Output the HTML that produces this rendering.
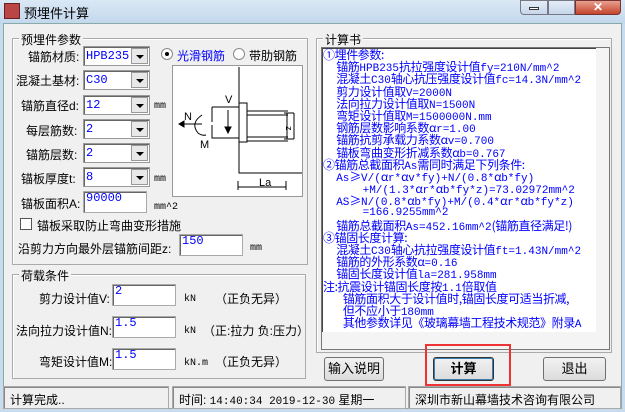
<!DOCTYPE html><html><head><meta charset="utf-8"><style>
*{margin:0;padding:0;box-sizing:border-box}
body{width:625px;height:412px;overflow:hidden;background:#c9dcee;font-family:"Liberation Sans","Noto Sans CJK SC",sans-serif;font-size:12px;color:#000;position:relative}
.a{position:absolute;white-space:nowrap}
.client{position:absolute;left:3px;top:23px;width:619px;height:386px;background:#f0f0f0;border:1px solid #8aa;}
.grp{position:absolute;border:1px solid #aaa;box-shadow:inset 1px 1px 0 #fff}
.lg{position:absolute;background:#f0f0f0;padding:0 2px;font-size:12px;top:-8px;left:6px}
.cb{position:absolute;height:20px;width:68px;background:#fff;border:1px solid #999;box-shadow:inset 1px 1px 0 #666;color:#00f;font-family:"Liberation Mono",monospace;font-size:12px;padding:2px 2px;line-height:14px}
.cb i{position:absolute;right:1px;top:1px;width:17px;height:16px;background:#e8e8e8;border:1px solid #999;}
.cb i:after{content:"";position:absolute;left:4px;top:6px;border:4px solid transparent;border-top:4px solid #000}
.tb{position:absolute;height:22px;background:#fff;border:1px solid #aaa;box-shadow:inset 1px 1px 0 #666;color:#00f;font-family:"Liberation Mono",monospace;font-size:12px;padding:0 2px}
.unit{position:absolute;font-family:"Liberation Mono",monospace;font-size:10px}
.btn{position:absolute;height:24px;border:1px solid #707070;border-radius:3px;background:linear-gradient(#f2f2f2,#dcdcdc);text-align:center;line-height:22px;font-size:13px}
.txt{font-family:"Liberation Mono",monospace;font-size:11px;color:#00f}
.txt div{white-space:nowrap;height:12.2px;line-height:12.2px;overflow:visible;display:block}
.txt b{font-weight:normal;font-family:"Noto Sans CJK SC",sans-serif;font-size:12px;letter-spacing:-0.4px;line-height:1}
</style></head><body>
<div class="a" style="left:0;top:0;width:625px;height:24px;background:linear-gradient(#dbe8f5,#c3d7ec)"></div>
<div class="a" style="left:4px;top:3px;width:16px;height:16px;background:#b44;border:1px solid #622"></div>
<div class="a" style="left:24px;top:3px;font-size:13px">预埋件计算</div>
<div class="a" style="left:520px;top:0;width:28px;height:15px;border:1px solid #778;border-radius:0 0 0 4px;background:linear-gradient(#e4edf7,#c6d6ea)"><div style="position:absolute;left:8px;top:6px;width:10px;height:3px;border:1px solid #333;background:#fff"></div></div>
<div class="a" style="left:548px;top:0;width:27px;height:15px;border:1px solid #778;background:linear-gradient(#e4edf7,#c6d6ea)"></div>
<div class="a" style="left:575px;top:0;width:46px;height:15px;border:1px solid #733;border-radius:0 0 4px 0;background:linear-gradient(#e8a090,#c4442c);color:#fff;text-align:center;font-weight:bold;line-height:13px">✕</div>
<div class="client"></div>

<div class="grp" style="left:12px;top:38px;width:296px;height:227px"><div class="lg">预埋件参数</div></div>
<div class="a" style="left:28px;top:48px">锚筋材质:</div><div class="cb" style="left:83px;top:46px;width:67px">HPB235<i></i></div>
<div class="a" style="left:16px;top:72px">混凝土基材:</div><div class="cb" style="left:83px;top:70px;width:67px">C30<i></i></div>
<div class="a" style="left:21px;top:97px">锚筋直径d:</div><div class="cb" style="left:83px;top:95px;width:67px">12<i></i></div><div class="unit" style="left:154px;top:101px">mm</div>
<div class="a" style="left:26px;top:122px">每层筋数:</div><div class="cb" style="left:83px;top:119px;width:67px">2<i></i></div>
<div class="a" style="left:26px;top:146px">锚筋层数:</div><div class="cb" style="left:83px;top:143px;width:67px">2<i></i></div>
<div class="a" style="left:21px;top:170px">锚板厚度t:</div><div class="cb" style="left:83px;top:167px;width:67px">8<i></i></div><div class="unit" style="left:154px;top:174px">mm</div>
<div class="a" style="left:21px;top:195px">锚板面积A:</div><div class="tb" style="left:83px;top:191px;width:64px;height:22px;line-height:13px">90000</div><div class="unit" style="left:154px;top:202px">mm^2</div>
<div class="a" style="left:20px;top:218px;width:12px;height:12px;border:1px solid #555;background:#fff"></div>
<div class="a" style="left:37px;top:217px">锚板采取防止弯曲变形措施</div>
<div class="a" style="left:18px;top:240px">沿剪力方向最外层锚筋间距z:</div><div class="tb" style="left:179px;top:234px;width:64px;height:22px;line-height:12px">150</div><div class="unit" style="left:250px;top:243px">mm</div>

<div class="a" style="left:161px;top:48px;width:12px;height:12px;border-radius:50%;border:1px solid #888;background:#fff"><div style="position:absolute;left:3px;top:3px;width:4px;height:4px;border-radius:50%;background:#000"></div></div>
<div class="a" style="left:177px;top:47px;color:#00f">光滑钢筋</div>
<div class="a" style="left:233px;top:48px;width:12px;height:12px;border-radius:50%;border:1px solid #888;background:#fff"></div>
<div class="a" style="left:249px;top:47px">带肋钢筋</div>
<svg class="a" style="left:172px;top:65px" width="131" height="132" viewBox="0 0 131 132">
<rect x="0.5" y="0.5" width="130" height="131" fill="#fff" stroke="#999"/>
<g stroke="#000" fill="none" stroke-width="1">
<path d="M67 2V108H130M67 108"/>
<rect x="67" y="38" width="8" height="39" fill="#fff"/>
<path d="M75 46H116M75 50H116M75 72H116M75 76H116"/>
<path d="M115 48V74M112 48H122M112 74H122M122 48V74"/>
<path d="M40 42H67M40 42V57M40 60V73H67"/>
<path d="M56 45V67"/><path d="M53 62L56 68L59 62Z" fill="#000"/>
<path d="M8 59H30"/><path d="M12 56L7 59L12 62Z" fill="#000"/>
<path d="M30 50Q18 58 26 68Q30 71 34 70"/>
<path d="M66 116V125M114 116V125M66 122H114"/>
</g>
<text x="53" y="38" font-size="11" font-family="Liberation Sans">V</text>
<text x="12" y="55" font-size="11" font-family="Liberation Sans">N</text>
<text x="28" y="83" font-size="11" font-family="Liberation Sans">M</text>
<text x="87" y="121" font-size="11" font-family="Liberation Sans">La</text>
<text x="117" y="64" font-size="9" font-family="Liberation Sans" transform="rotate(90 117 61)">z</text>
</svg>

<div class="grp" style="left:12px;top:274px;width:294px;height:105px"><div class="lg">荷载条件</div></div>
<div class="a" style="left:39px;top:290px">剪力设计值V:</div><div class="tb" style="left:112px;top:284px;width:64px;height:22px;line-height:12px">2</div><div class="unit" style="left:184px;top:294px">kN</div><div class="a" style="left:215px;top:290px">（正负无异）</div>
<div class="a" style="left:16px;top:322px">法向拉力设计值N:</div><div class="tb" style="left:112px;top:316px;width:64px;height:22px;line-height:12px">1.5</div><div class="unit" style="left:184px;top:326px">kN</div><div class="a" style="left:203px;top:322px">（正:拉力 负:压力）</div>
<div class="a" style="left:39px;top:353px">弯矩设计值M:</div><div class="tb" style="left:112px;top:348px;width:64px;height:22px;line-height:12px">1.5</div><div class="unit" style="left:184px;top:358px">kN.m</div><div class="a" style="left:215px;top:353px">（正负无异）</div>

<div class="grp" style="left:316px;top:38px;width:296px;height:315px"><div class="lg">计算书</div></div>
<div class="a" style="left:321px;top:47px;width:289px;height:303px;background:#fff;border:1px solid #777;box-shadow:inset 1px 1px 0 #444"></div>
<div class="a" style="left:596px;top:48px;width:13px;height:284px;background:#f4f4f4"></div>
<div class="a" style="left:322px;top:332px;width:287px;height:17px;background:#f4f4f4"></div>
<div class="a txt" style="left:323px;top:49px">
<div><b>①埋件参数:</b></div>
<div>&nbsp;&nbsp;<b>锚筋</b>HPB235<b>抗拉强度设计值</b>fy=210N/mm^2</div>
<div>&nbsp;&nbsp;<b>混凝土</b>C30<b>轴心抗压强度设计值</b>fc=14.3N/mm^2</div>
<div>&nbsp;&nbsp;<b>剪力设计值取</b>V=2000N</div>
<div>&nbsp;&nbsp;<b>法向拉力设计值取</b>N=1500N</div>
<div>&nbsp;&nbsp;<b>弯矩设计值取</b>M=1500000N.mm</div>
<div>&nbsp;&nbsp;<b>钢筋层数影响系数α</b>r=1.00</div>
<div>&nbsp;&nbsp;<b>锚筋抗剪承载力系数α</b>v=0.700</div>
<div>&nbsp;&nbsp;<b>锚板弯曲变形折减系数α</b>b=0.767</div>
<div><b>②锚筋总截面积</b>As<b>需同时满足下列条件:</b></div>
<div>&nbsp;&nbsp;As<b>≥</b>V/(<b>α</b>r*<b>α</b>v*fy)+N/(0.8*<b>α</b>b*fy)</div>
<div>&nbsp;&nbsp;&nbsp;&nbsp;&nbsp;&nbsp;+M/(1.3*<b>α</b>r*<b>α</b>b*fy*z)=73.02972mm^2</div>
<div>&nbsp;&nbsp;AS<b>≥</b>N/(0.8*<b>α</b>b*fy)+M/(0.4*<b>α</b>r*<b>α</b>b*fy*z)</div>
<div>&nbsp;&nbsp;&nbsp;&nbsp;&nbsp;&nbsp;=166.9255mm^2</div>
<div>&nbsp;&nbsp;<b>锚筋总截面积</b>As=452.16mm^2<b>(锚筋直径满足!)</b></div>
<div><b>③锚固长度计算:</b></div>
<div>&nbsp;&nbsp;<b>混凝土</b>C30<b>轴心抗拉强度设计值</b>ft=1.43N/mm^2</div>
<div>&nbsp;&nbsp;<b>锚筋的外形系数α</b>=0.16</div>
<div>&nbsp;&nbsp;<b>锚固长度设计值</b>la=281.958mm</div>
<div><b>注:抗震设计锚固长度按</b>1.1<b>倍取值</b></div>
<div>&nbsp;&nbsp;&nbsp;<b>锚筋面积大于设计值时,锚固长度可适当折减,</b></div>
<div>&nbsp;&nbsp;&nbsp;<b>但不应小于</b>180mm</div>
<div>&nbsp;&nbsp;&nbsp;<b>其他参数详见《玻璃幕墙工程技术规范》附录</b>A</div>
</div>

<div class="btn" style="left:324px;top:357px;width:60px">输入说明</div>
<div class="a" style="left:425px;top:344px;width:86px;height:42px;border:2px solid #e33"></div>
<div class="btn" style="left:433px;top:357px;width:61px;font-weight:bold;border-color:#333;box-shadow:inset 0 0 0 1px #3c7fb1">计算</div>
<div class="btn" style="left:543px;top:357px;width:63px">退出</div>

<div class="a" style="left:3px;top:386px;width:166px;height:23px;border:1px solid #aaa;box-shadow:inset 1px 1px 0 #888;padding:4px 6px">计算完成..</div>
<div class="a" style="left:172px;top:386px;width:234px;height:23px;border:1px solid #aaa;box-shadow:inset 1px 1px 0 #888;padding:4px 6px">时间: <span style="font-family:'Liberation Mono',monospace;font-size:11px">14:40:34 2019-12-30</span> 星期一</div>
<div class="a" style="left:408px;top:386px;width:213px;height:23px;border:1px solid #aaa;box-shadow:inset 1px 1px 0 #888;padding:4px 6px">深圳市新山幕墙技术咨询有限公司</div>
</body></html>
